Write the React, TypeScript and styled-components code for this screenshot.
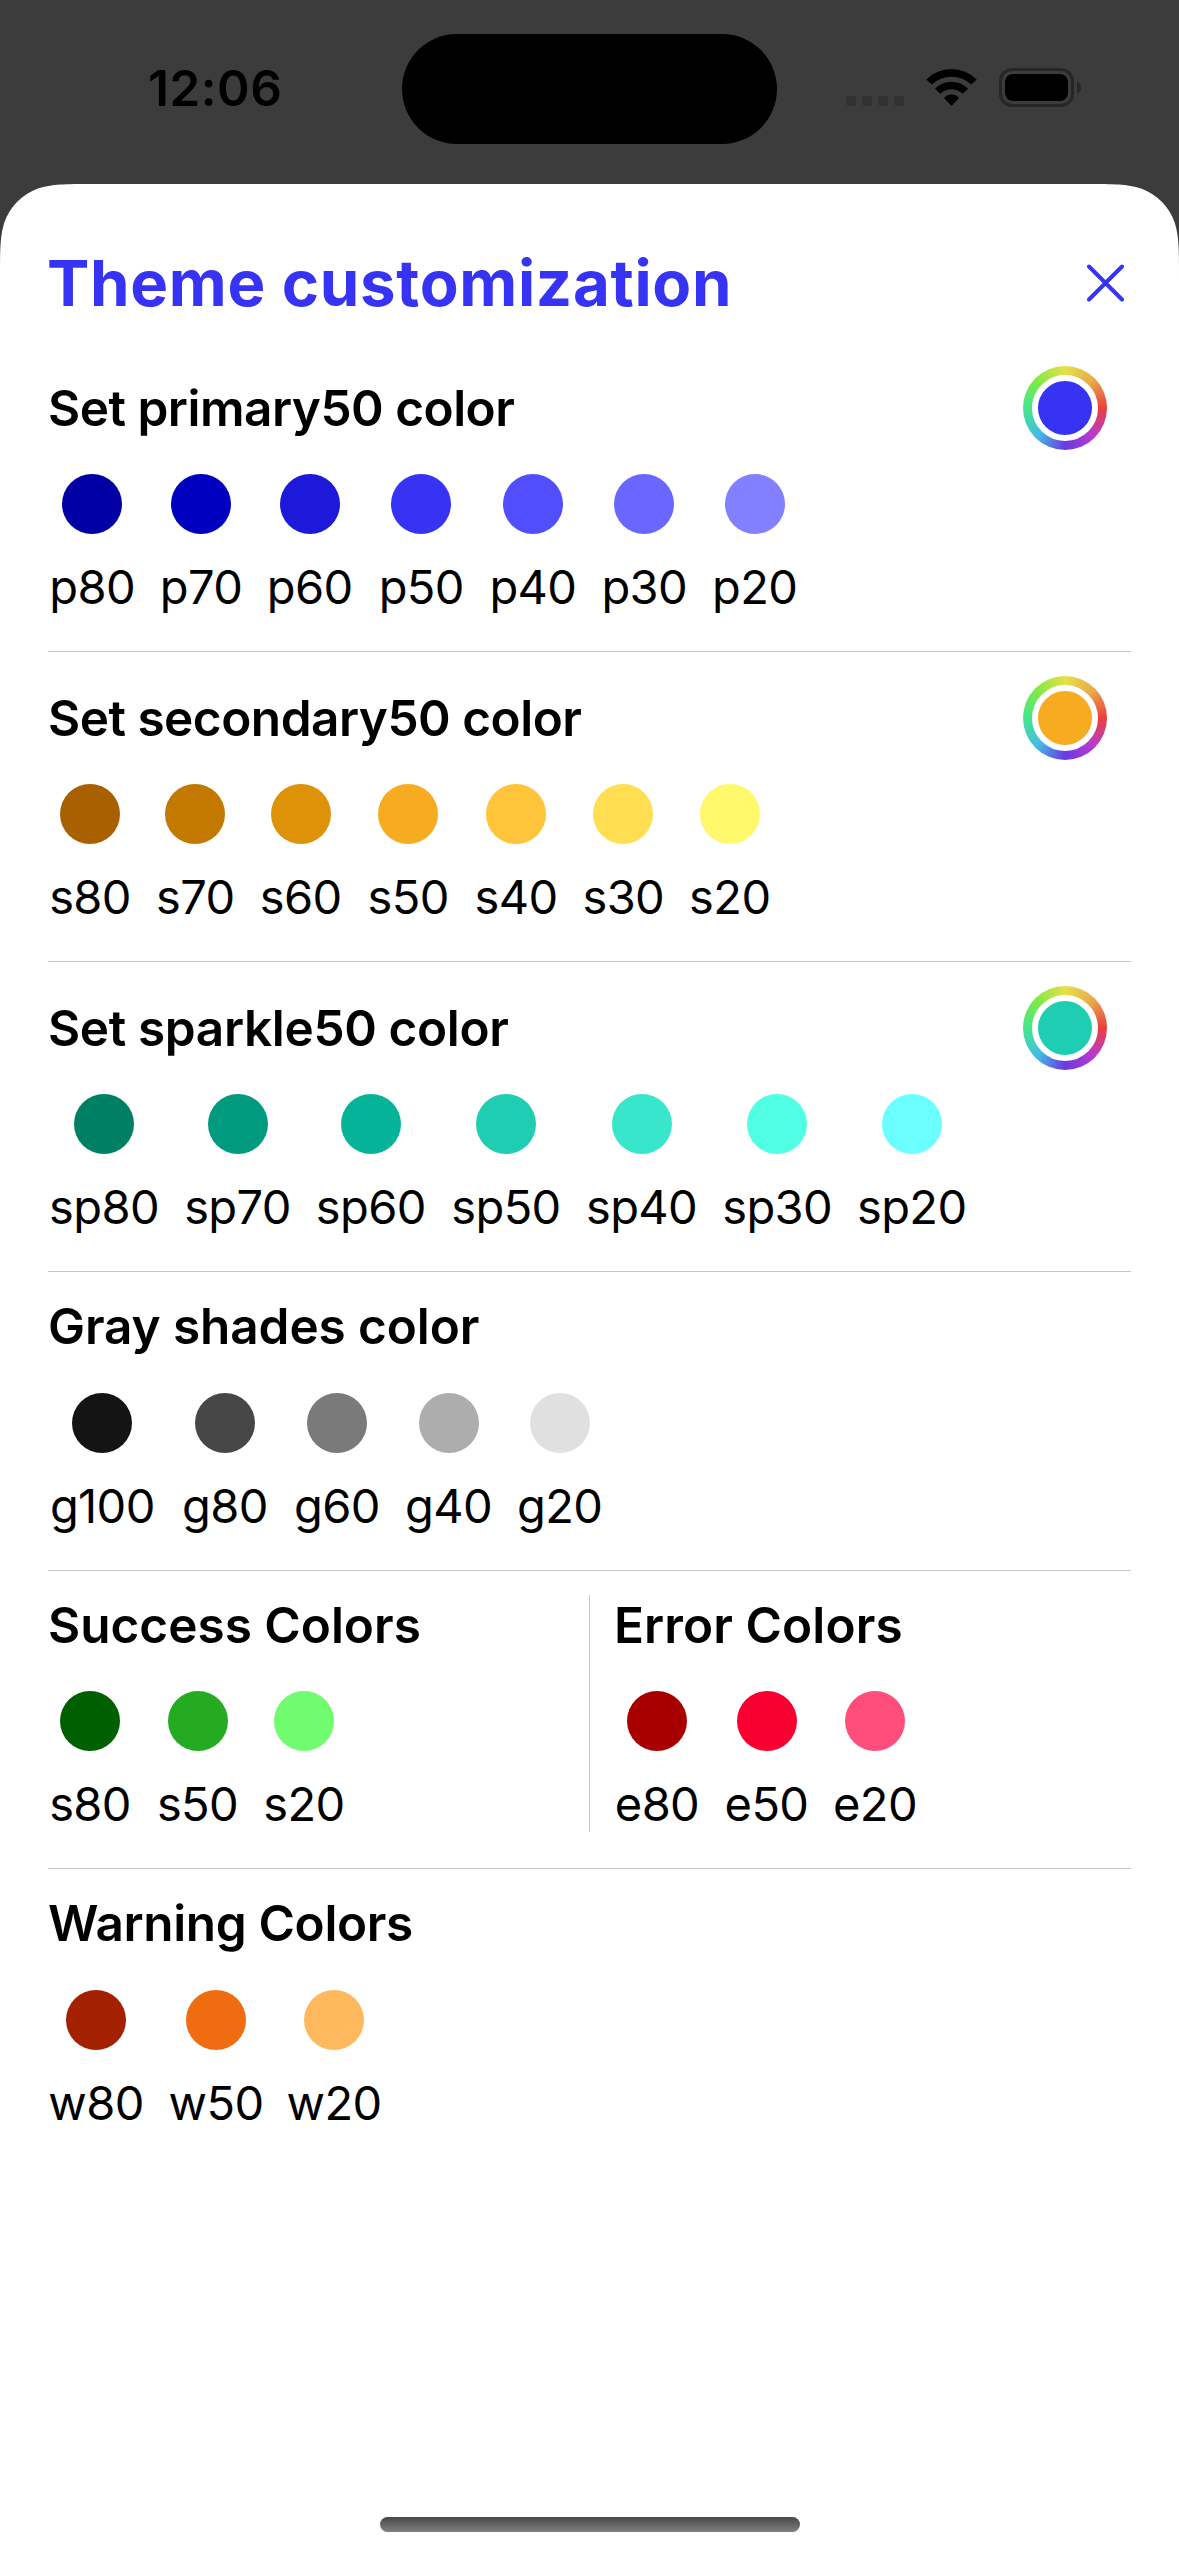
import React, { Fragment } from "react";
import styled, { createGlobalStyle } from "styled-components";

const GlobalStyle = createGlobalStyle`
  * { box-sizing: border-box; }
  body {
    margin: 0;
    background: #3c3c3c;
    font-family: Inter, "Liberation Sans", sans-serif;
    color: #000;
    -webkit-font-smoothing: antialiased;
  }
`;

const Screen = styled.div`
  display: flex;
  flex-direction: column;
  width: 1179px;
  height: 2556px;
  overflow: hidden;
  background: #3c3c3c;
`;

const StatusBar = styled.header`
  display: grid;
  grid-template-columns: 402px 375px 402px;
  align-items: center;
  height: 184px;
  padding-bottom: 6px;
`;

const Time = styled.time`
  padding: 0 0 2px 148px;
  font-size: 49.5px;
  font-weight: 600;
  line-height: 60px;
  letter-spacing: 0.5px;
`;

const Island = styled.div`
  height: 110px;
  border-radius: 55px;
  background: #000;
`;

const StatusIcons = styled.svg`
  width: 240px;
  height: 44px;
  margin: 0 0 2px 67px;
`;

const Sheet = styled.main`
  display: flex;
  flex-direction: column;
  flex: 1;
  padding: 60px 48px 24px;
  background: #fff;
  clip-path: path("M91.72 0C65.31 0 52.1 0 37.89 4.49C22.37 10.14 10.14 22.37 4.49 37.89C0 52.1 0 65.31 0 91.72V2372H1179V91.72C1179 65.31 1179 52.1 1174.51 37.89C1168.86 22.37 1156.63 10.14 1141.11 4.49C1126.9 0 1113.69 0 1087.28 0Z");
`;

const TitleBar = styled.div`
  display: flex;
  align-items: center;
  justify-content: space-between;
  height: 78px;
  padding-right: 7px;
`;

const Title = styled.h1`
  margin: 0 0 0 -1px;
  color: #3733f5;
  font-size: 63.5px;
  font-weight: 700;
  line-height: 78px;
  letter-spacing: 0.7px;
`;

const CloseButton = styled.button`
  display: flex;
  padding: 0;
  border: 0;
  background: none;
`;

const Divider = styled.hr`
  width: 100%;
  height: 1px;
  margin: 0;
  border: 0;
  background: #c6c6c8;
`;

const Section = styled.section<{ $first?: boolean }>`
  padding: ${(p) => (p.$first ? 44 : 24)}px 0 36px;
`;

const SectionHeader = styled.div<{ $picker?: boolean }>`
  display: flex;
  align-items: center;
  justify-content: space-between;
  height: ${(p) => (p.$picker ? "84px" : "61px")};
  margin-bottom: ${(p) => (p.$picker ? "24px" : "35.67px")};
  padding-right: 24px;
`;

const Heading = styled.h2<{ $tracking: number }>`
  margin: 0;
  font-size: 49.5px;
  font-weight: 565;
  line-height: 61px;
  letter-spacing: ${(p) => p.$tracking}px;
  white-space: nowrap;
`;

const ColorWell = styled.button`
  display: grid;
  place-items: center;
  width: 84px;
  height: 84px;
  padding: 9px;
  border: 0;
  border-radius: 50%;
  background: conic-gradient(
    #e6e04a 0deg,
    #e8aa4a 45deg,
    #ea3f3f 90deg,
    #b83ad0 135deg,
    #6a3ae0 180deg,
    #44bce8 225deg,
    #44e68c 270deg,
    #80ea44 315deg,
    #e6e04a 360deg
  );
`;

const WellCenter = styled.span<{ $color: string }>`
  width: 66px;
  height: 66px;
  border: 6px solid #fff;
  border-radius: 50%;
  background: ${(p) => p.$color};
`;

const SwatchRow = styled.div`
  display: flex;
  gap: 24px;
`;

const Swatch = styled.div<{ $width: number }>`
  display: flex;
  flex-direction: column;
  align-items: center;
  gap: 24px;
  width: ${(p) => p.$width}px;
`;

const Dot = styled.span<{ $color: string }>`
  width: 60px;
  height: 60px;
  border-radius: 50%;
  background: ${(p) => p.$color};
`;

const Label = styled.span`
  font-size: 47px;
  line-height: 57px;
  letter-spacing: -0.6px;
  white-space: nowrap;
`;

const Columns = styled.section`
  display: grid;
  grid-template-columns: 541px 1px 1fr;
  padding: 24px 0 36px;
`;

const ColumnRule = styled.div`
  background: #c6c6c8;
`;

const Column = styled.div<{ $inset?: boolean }>`
  padding-left: ${(p) => (p.$inset ? 24 : 0)}px;
`;

const HomeIndicator = styled.div`
  width: 420px;
  height: 15px;
  margin: auto auto 0;
  border-radius: 8px;
  background: linear-gradient(#484848, #808080);
`;

type Shade = [name: string, color: string, width: number];

type Group = { title: string; tracking: number; well?: string; shades: Shade[] };

const groups: Group[] = [
  {
    title: "Set primary50 color",
    tracking: -0.5,
    well: "#3733f5",
    shades: [
      ["p80", "#0000a5", 88.3],
      ["p70", "#0000c0", 81.6],
      ["p60", "#1c19da", 87.7],
      ["p50", "#3733f5", 87.4],
      ["p40", "#504eff", 87.9],
      ["p30", "#6967ff", 86.8],
      ["p20", "#8280ff", 86],
    ],
  },
  {
    title: "Set secondary50 color",
    tracking: -0.5,
    well: "#f7ab20",
    shades: [
      ["s80", "#a96000", 84],
      ["s70", "#c37800", 78.5],
      ["s60", "#dd9207", 84.2],
      ["s50", "#f7ab20", 83],
      ["s40", "#ffc439", 84.5],
      ["s30", "#ffde52", 82.2],
      ["s20", "#fff86b", 82.8],
    ],
  },
  {
    title: "Set sparkle50 color",
    tracking: -0.35,
    well: "#1fceb2",
    shades: [
      ["sp80", "#008062", 112],
      ["sp70", "#009a7e", 107],
      ["sp60", "#05b498", 111.7],
      ["sp50", "#1fceb2", 110.6],
      ["sp40", "#38e7cb", 112.5],
      ["sp30", "#51ffe4", 110.7],
      ["sp20", "#6afffe", 110.5],
    ],
  },
  {
    title: "Gray shades color",
    tracking: -0.1,
    shades: [
      ["g100", "#141414", 108.6],
      ["g80", "#474747", 88.5],
      ["g60", "#7a7a7a", 87.5],
      ["g40", "#adadad", 88],
      ["g20", "#e0e0e0", 86],
    ],
  },
];

const success: Group = {
  title: "Success Colors",
  tracking: 0,
  shades: [
    ["s80", "#006000", 84],
    ["s50", "#24ab22", 83],
    ["s20", "#71fb6e", 82],
  ],
};

const error: Group = {
  title: "Error Colors",
  tracking: 0.1,
  shades: [
    ["e80", "#a80000", 86],
    ["e50", "#f80030", 85],
    ["e20", "#ff4e7b", 84],
  ],
};

const warning: Group = {
  title: "Warning Colors",
  tracking: -0.35,
  shades: [
    ["w80", "#a32000", 96],
    ["w50", "#f06c10", 96],
    ["w20", "#ffb95c", 92],
  ],
};

function ColorGroup({ title, tracking, well, shades }: Group) {
  return (
    <>
      <SectionHeader $picker={!!well}>
        <Heading $tracking={tracking}>{title}</Heading>
        {well && (
          <ColorWell aria-label={title}>
            <WellCenter $color={well} />
          </ColorWell>
        )}
      </SectionHeader>
      <SwatchRow>
        {shades.map(([name, color, width]) => (
          <Swatch key={name} $width={width}>
            <Dot $color={color} />
            <Label>{name}</Label>
          </Swatch>
        ))}
      </SwatchRow>
    </>
  );
}

export default function App() {
  return (
    <Screen>
      <GlobalStyle />
      <StatusBar>
        <Time>12:06</Time>
        <Island />
        <StatusIcons viewBox="844 66 240 44">
          <g fill="#313131">
            <rect x="846" y="96" width="10" height="10" rx="3.5" />
            <rect x="862" y="96" width="10" height="10" rx="3.5" />
            <rect x="878" y="96" width="10" height="10" rx="3.5" />
            <rect x="894" y="96" width="10" height="10" rx="3.5" />
          </g>
          <path d="M926.3 79.5Q937 69 951.5 69T976.7 79.5L971.3 84.6Q963 76.8 951.5 76.8T931.7 84.6Z" />
          <path d="M935 88.8Q942 81.8 951.5 81.8T968 88.8L962.6 93.8Q957.8 89.3 951.5 89.3T940.4 93.8Z" />
          <path d="M944 98Q947 94.6 951.5 94.6T959 98L951.5 106Z" />
          <rect x="1000.5" y="69.5" width="72" height="36" rx="11.5" fill="none" stroke="#262626" strokeWidth="3" />
          <rect x="1005" y="74" width="63" height="27" rx="8" />
          <path d="M1077 81.5Q1081 83.5 1081 87.5T1077 93.5Z" fill="#262626" />
        </StatusIcons>
      </StatusBar>
      <Sheet>
        <TitleBar>
          <Title>Theme customization</Title>
          <CloseButton aria-label="Close">
            <svg width="37" height="38" viewBox="0 0 37 38" fill="none" stroke="#3733f5" strokeWidth="4" strokeLinecap="round">
              <path d="M2 2.5L35 35.5M35 2.5L2 35.5" />
            </svg>
          </CloseButton>
        </TitleBar>
        {groups.map((group, i) => (
          <Fragment key={group.title}>
            <Section $first={i === 0}>
              <ColorGroup {...group} />
            </Section>
            <Divider />
          </Fragment>
        ))}
        <Columns>
          <Column>
            <ColorGroup {...success} />
          </Column>
          <ColumnRule />
          <Column $inset>
            <ColorGroup {...error} />
          </Column>
        </Columns>
        <Divider />
        <Section>
          <ColorGroup {...warning} />
        </Section>
        <HomeIndicator />
      </Sheet>
    </Screen>
  );
}
